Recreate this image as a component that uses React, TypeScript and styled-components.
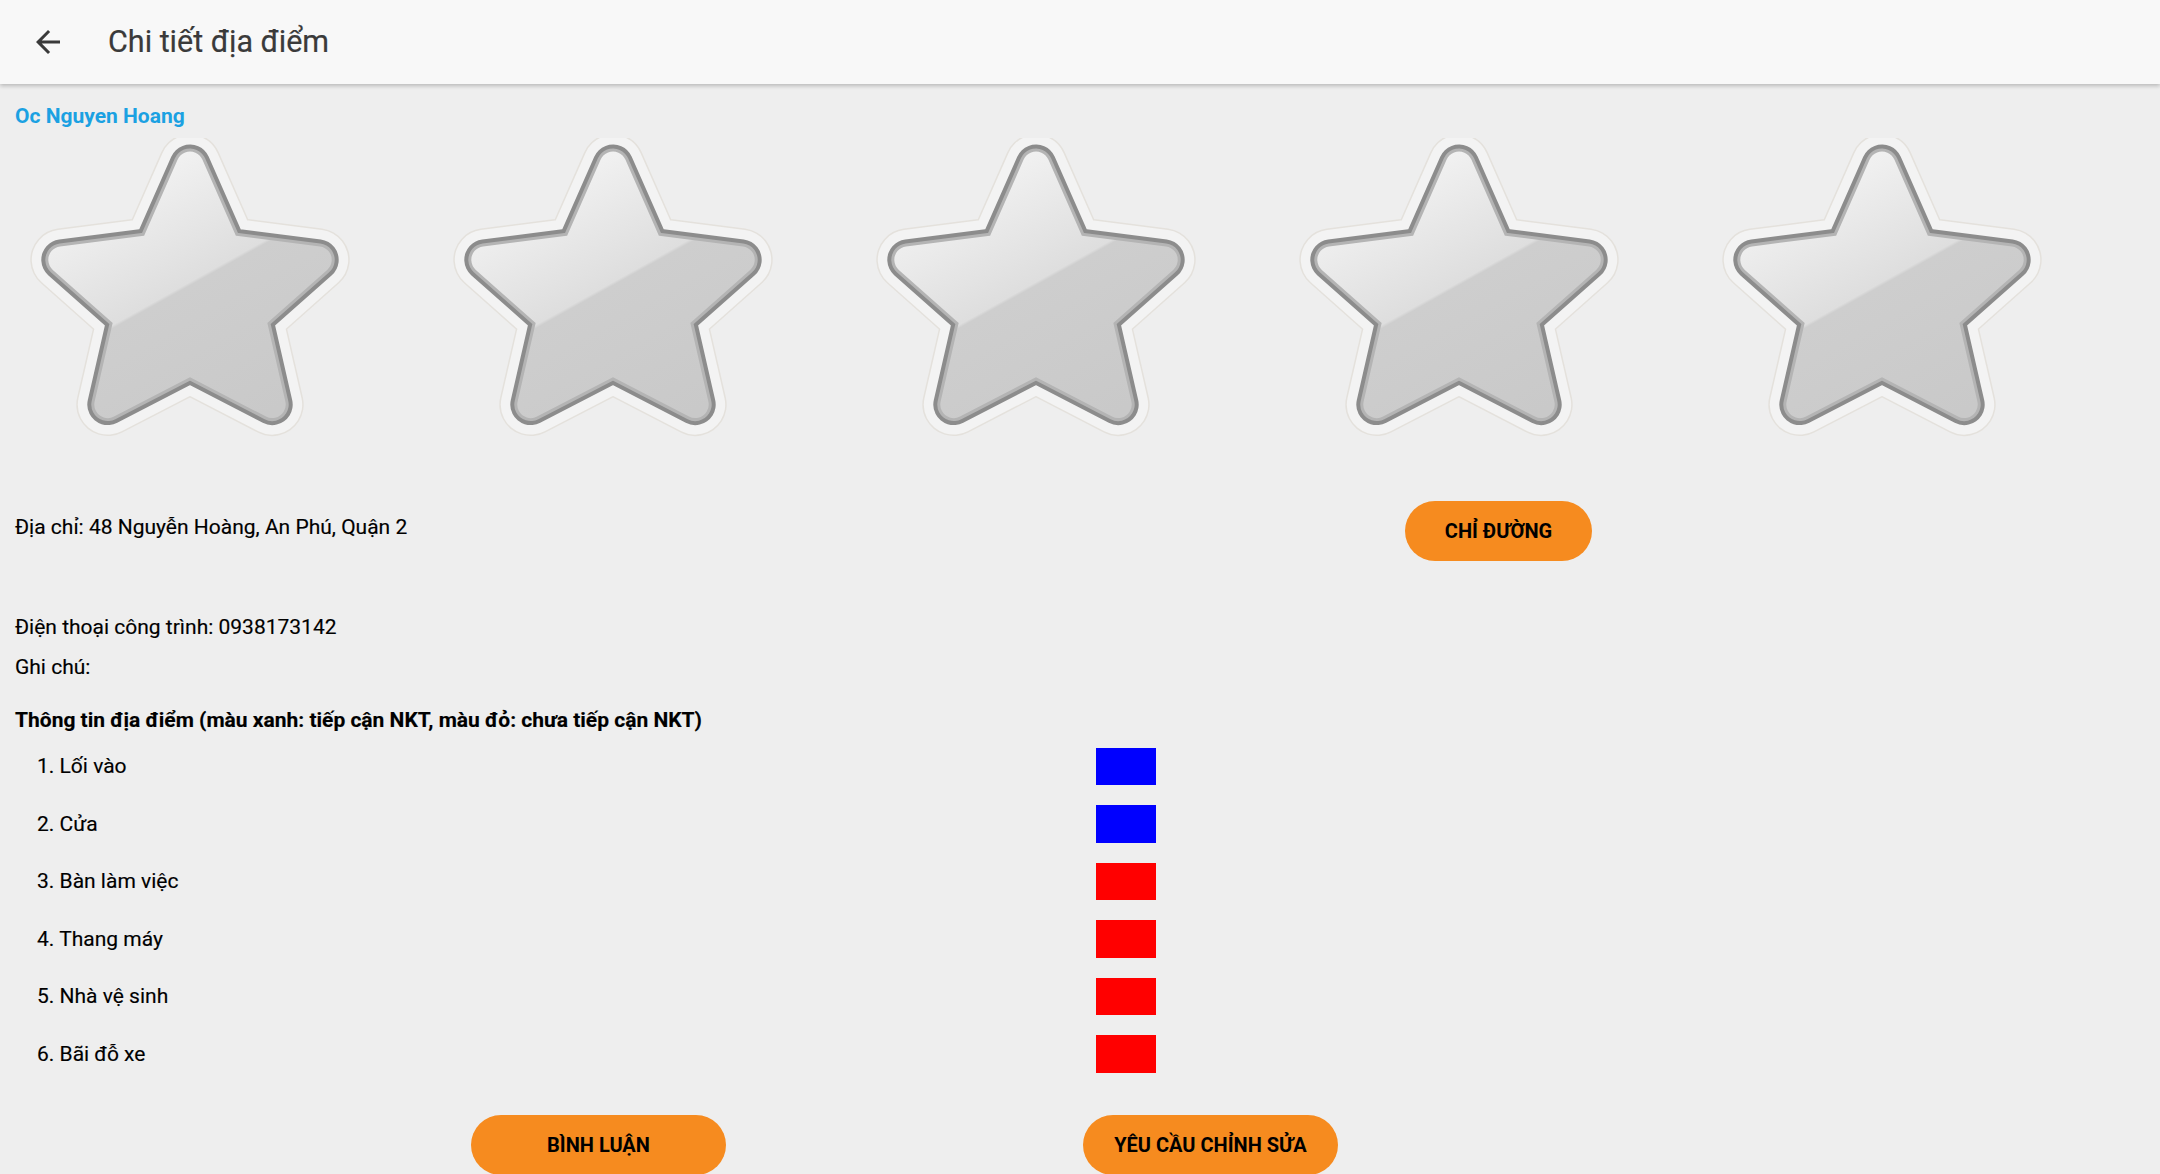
import React from "react";
import styled, { createGlobalStyle } from "styled-components";

const GlobalStyle = createGlobalStyle`
  html, body {
    margin: 0;
    padding: 0;
    overflow: hidden;
    background: #eeeeee;
  }
  body {
    font-family: Roboto, "Noto Sans", "Liberation Sans", sans-serif;
    color: #000;
  }
  * { box-sizing: border-box; }
`;

const Page = styled.div`
  width: 2160px;
  height: 1174px;
  overflow: hidden;
  background: #eeeeee;
  display: flex;
  flex-direction: column;
`;

const Header = styled.header`
  height: 84px;
  flex-shrink: 0;
  background: #f8f8f8;
  box-shadow: 0 2px 4px rgba(0, 0, 0, 0.22);
  display: flex;
  align-items: center;
  padding-left: 30px;
  position: relative;
  z-index: 1;
`;

const BackButton = styled.button`
  width: 36px;
  height: 36px;
  border: 0;
  padding: 0;
  background: none;
  display: flex;
  color: #3a3a3a;
  cursor: pointer;
`;

const Title = styled.h1`
  margin: 0 0 0 42px;
  font-size: 30.5px;
  font-weight: 400;
  color: #3a3a3a;
  line-height: 36px;
  -webkit-text-stroke: 0.2px #3a3a3a;
`;

const Content = styled.main`
  padding: 0 15px;
  display: flex;
  flex-direction: column;
`;

const PlaceName = styled.div`
  margin-top: 20px;
  font-size: 21px;
  line-height: 24px;
  font-weight: 700;
  color: #1ba1e2;
`;

const StarRow = styled.div`
  display: flex;
  gap: 93px;
  margin-top: 10px;
  padding-left: 10px;
`;

const StarSvg = styled.svg`
  display: block;
  flex-shrink: 0;
`;

const AddressRow = styled.div`
  display: grid;
  grid-template-columns: 1390px 187px;
  margin-top: 53px;
`;

const Line = styled.div<{ $top?: number; $lh?: number; $bold?: boolean }>`
  font-size: 21px;
  line-height: ${(p) => p.$lh ?? 40}px;
  font-weight: ${(p) => (p.$bold ? 700 : 400)};
  margin-top: ${(p) => p.$top ?? 0}px;
  color: #000;
  white-space: nowrap;
  -webkit-text-stroke: 0.15px #000;
`;

const PillButton = styled.button<{ $width: number }>`
  width: ${(p) => p.$width}px;
  height: 60px;
  border: 0;
  border-radius: 30px;
  background: #f68b1f;
  color: #000;
  font-family: Roboto, "Noto Sans", sans-serif;
  font-size: 20px;
  font-weight: 700;
  display: flex;
  align-items: center;
  justify-content: center;
  padding: 0;
  cursor: pointer;
`;

const FeatureList = styled.ol`
  list-style: none;
  margin: 0;
  padding: 0;
`;

const FeatureItem = styled.li`
  display: grid;
  grid-template-columns: 1059px 60px;
  align-items: center;
  height: 57.5px;
  padding-left: 22px;
  font-size: 21px;
  line-height: 28px;
  -webkit-text-stroke: 0.15px #000;
`;

const Swatch = styled.span<{ $ok: boolean }>`
  display: block;
  width: 60px;
  height: 37.5px;
  background: ${(p) => (p.$ok ? "#0000ff" : "#ff0000")};
`;

const BottomBar = styled.div`
  display: flex;
  gap: 357px;
  margin-top: 32px;
  padding-left: 456px;
`;

const STAR =
  "165,27 201.6,110.1 293.2,121.8 227.4,180.2 247.2,266.6 165,224 82.8,266.6 102.6,180.2 36.8,121.8 128.4,110.1";

function Star({ id }: { id: string }) {
  return (
    <StarSvg viewBox="0 0 330 310" width={330} height={310}>
      <defs>
        <linearGradient
          id={id}
          gradientUnits="userSpaceOnUse"
          x1="95.5"
          y1="14.4"
          x2="241.5"
          y2="276.6"
        >
          <stop offset="0" stopColor="#f6f6f6" />
          <stop offset="0.49" stopColor="#dedede" />
          <stop offset="0.5" stopColor="#cecece" />
          <stop offset="1" stopColor="#c9c9c9" />
        </linearGradient>
      </defs>
      <g strokeLinejoin="round">
        <polygon points={STAR} fill="#f3f3f3" stroke="#e4e1dc" strokeWidth={63} />
        <polygon points={STAR} fill="#f3f3f3" stroke="#f3f3f3" strokeWidth={60} />
        <polygon points={STAR} fill="#8c8c8c" stroke="#8c8c8c" strokeWidth={41} />
        <polygon points={STAR} fill="#b4b4b4" stroke="#b4b4b4" strokeWidth={33} />
        <polygon
          points={STAR}
          fill={`url(#${id})`}
          stroke={`url(#${id})`}
          strokeWidth={27}
        />
      </g>
    </StarSvg>
  );
}

const features = [
  { label: "1. Lối vào", ok: true },
  { label: "2. Cửa", ok: true },
  { label: "3. Bàn làm việc", ok: false },
  { label: "4. Thang máy", ok: false },
  { label: "5. Nhà vệ sinh", ok: false },
  { label: "6. Bãi đỗ xe", ok: false },
];

export default function App() {
  return (
    <>
      <GlobalStyle />
      <Page>
        <Header>
          <BackButton aria-label="Quay lại">
            <svg width="36" height="36" viewBox="0 0 24 24" fill="currentColor">
              <path d="M20 11H7.83l5.59-5.59L12 4l-8 8 8 8 1.41-1.41L7.83 13H20v-2z" />
            </svg>
          </BackButton>
          <Title>Chi tiết địa điểm</Title>
        </Header>
        <Content>
          <PlaceName>Oc Nguyen Hoang</PlaceName>
          <StarRow>
            {[0, 1, 2, 3, 4].map((i) => (
              <Star key={i} id={`star-grad-${i}`} />
            ))}
          </StarRow>
          <AddressRow>
            <Line $top={12} $lh={28}>
              Địa chỉ: 48 Nguyễn Hoàng, An Phú, Quận 2
            </Line>
            <PillButton $width={187}>CHỈ ĐƯỜNG</PillButton>
          </AddressRow>
          <Line $top={46}>Điện thoại công trình: 0938173142</Line>
          <Line>Ghi chú:</Line>
          <Line $top={16} $lh={34.5} $bold>
            Thông tin địa điểm (màu xanh: tiếp cận NKT, màu đỏ: chưa tiếp cận NKT)
          </Line>
          <FeatureList>
            {features.map((f) => (
              <FeatureItem key={f.label}>
                <span>{f.label}</span>
                <Swatch $ok={f.ok} />
              </FeatureItem>
            ))}
          </FeatureList>
          <BottomBar>
            <PillButton $width={255}>BÌNH LUẬN</PillButton>
            <PillButton $width={255}>YÊU CẦU CHỈNH SỬA</PillButton>
          </BottomBar>
        </Content>
      </Page>
    </>
  );
}
